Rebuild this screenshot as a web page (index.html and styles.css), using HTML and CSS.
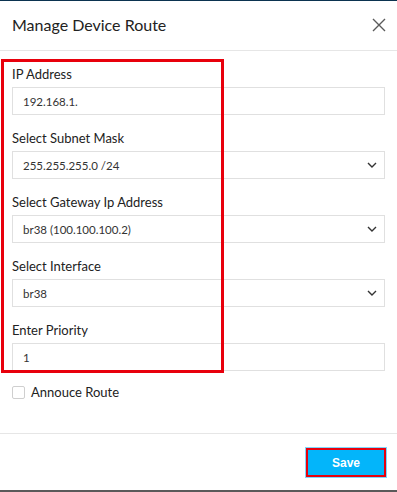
FILE: index.html
```html
<!DOCTYPE html>
<html>
<head>
<meta charset="utf-8">
<link rel="stylesheet" href="styles.css">
</head>
<body>
<div class="topline"></div>
<div class="modal">
  <div class="header">
    <h1 class="title">Manage Device Route</h1>
    <svg class="close" width="14" height="14" viewBox="0 0 14 14"><path d="M1 1L13 13M13 1L1 13" stroke="#5a5a5a" stroke-width="1.4" fill="none"/></svg>
  </div>
  <div class="body">
    <div class="field">
      <label class="label">IP Address</label>
      <div class="input">192.168.1.</div>
    </div>
    <div class="field">
      <label class="label">Select Subnet Mask</label>
      <div class="input select">255.255.255.0 /24<svg class="chev" width="10" height="6" viewBox="0 0 10 6"><path d="M1 1L5 5L9 1" stroke="#333" stroke-width="1.4" fill="none"/></svg></div>
    </div>
    <div class="field">
      <label class="label">Select Gateway Ip Address</label>
      <div class="input select">br38 (100.100.100.2)<svg class="chev" width="10" height="6" viewBox="0 0 10 6"><path d="M1 1L5 5L9 1" stroke="#333" stroke-width="1.4" fill="none"/></svg></div>
    </div>
    <div class="field">
      <label class="label">Select Interface</label>
      <div class="input select">br38<svg class="chev" width="10" height="6" viewBox="0 0 10 6"><path d="M1 1L5 5L9 1" stroke="#333" stroke-width="1.4" fill="none"/></svg></div>
    </div>
    <div class="field">
      <label class="label">Enter Priority</label>
      <div class="input">1</div>
    </div>
    <div class="check-row">
      <span class="checkbox"></span>
      <span class="check-label">Annouce Route</span>
    </div>
    <div class="annot-box"></div>
  </div>
  <div class="footer">
    <button class="save">Save</button>
  </div>
</div>
<div class="bottomline"></div>
</body>
</html>
```

FILE: styles.css
```css
html, body {
  margin: 0;
  padding: 0;
  background: #fff;
  font-family: Lato, "Noto Sans", sans-serif;
  color: #222;
}
.topline {
  height: 1px;
  background: #0b3350;
}
.modal {
  height: 489px;
  display: flex;
  flex-direction: column;
}
.header {
  height: 49px;
  flex: none;
  border-bottom: 1px solid #e6e6e6;
  display: flex;
  align-items: center;
  justify-content: space-between;
  padding: 0 11px 0 12px;
}
.title {
  margin: 0;
  font-size: 16px;
  font-weight: 400;
  color: #222;
  position: relative;
  top: -1px;
}
.close {
  display: block;
  position: relative;
  top: -1px;
}
.body {
  position: relative;
  flex: none;
  padding: 13px 12px 0 12px;
  height: 383px;
  box-sizing: border-box;
  border-bottom: 1px solid #e6e6e6;
}
.field {
  margin-bottom: 13px;
}
.label {
  display: block;
  font-size: 13px;
  line-height: 20px;
  margin-bottom: 3px;
  color: #222;
}
.input {
  height: 28px;
  box-sizing: border-box;
  border: 1px solid #e0e0e0;
  padding: 0 10px;
  font-size: 11.5px;
  color: #333;
  display: flex;
  align-items: center;
  justify-content: space-between;
}
.select {
  padding-right: 7px;
}
.chev {
  display: block;
}
.check-row {
  display: flex;
  align-items: center;
  gap: 6px;
  margin-top: 5px;
}
.checkbox {
  width: 11px;
  height: 11px;
  border: 1px solid #cfcfcf;
  border-radius: 2px;
  background: #fff;
}
.check-label {
  font-size: 13px;
  color: #222;
}
.annot-box {
  position: absolute;
  left: 1px;
  top: 8px;
  width: 217px;
  height: 308px;
  border: 3px solid #e8000c;
  pointer-events: none;
}
.footer {
  flex: 1;
  display: flex;
  justify-content: flex-end;
  align-items: flex-start;
  padding: 14px 11px 0 0;
  box-sizing: border-box;
}
.save {
  width: 80px;
  height: 29px;
  background: #03b5fa;
  color: #fff;
  font-family: "Liberation Sans", Arial, sans-serif;
  font-weight: 700;
  font-size: 12px;
  border: 2px solid #e8000c;
  outline: 1px solid #7fd6fb;
  padding: 0;
}
.bottomline {
  height: 2px;
  background: #5a5a5a;
}
```
